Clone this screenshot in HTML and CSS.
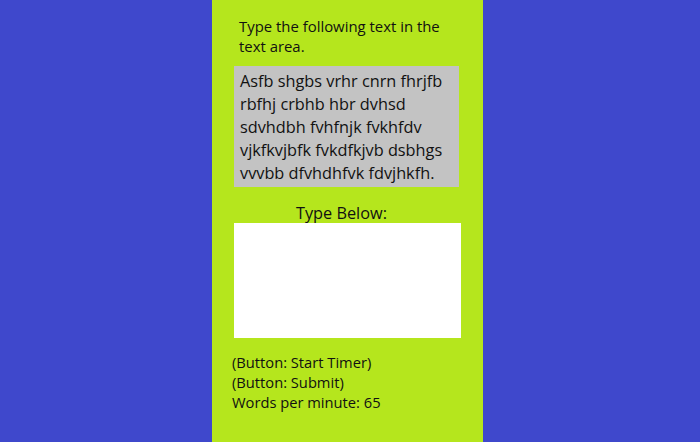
FILE: index.html
```html
<!DOCTYPE html>
<html>
<head>
<meta charset="utf-8">
<link rel="stylesheet" href="styles.css">
</head>
<body>
<main class="column">
  <p class="instructions">Type the following text in the text area.</p>
  <div class="sample">Asfb shgbs vrhr cnrn fhrjfb rbfhj crbhb hbr dvhsd sdvhdbh fvhfnjk fvkhfdv vjkfkvjbfk fvkdfkjvb dsbhgs vvvbb dfvhdhfvk fdvjhkfh.</div>
  <div class="label">Type Below:</div>
  <div class="typing-area"></div>
  <div class="controls">
    <div>(Button: Start Timer)</div>
    <div>(Button: Submit)</div>
    <div>Words per minute: 65</div>
  </div>
</main>
</body>
</html>
```
FILE: styles.css
```css
html, body {
  margin: 0;
  padding: 0;
}
body {
  background: #3f48cc;
  height: 442px;
  overflow: hidden;
  font-family: "Open Sans", "Noto Sans CJK KR", sans-serif;
  color: #111;
}
.column {
  margin-left: 212px;
  width: 271px;
  height: 442px;
  background: #b5e61d;
  display: flex;
  flex-direction: column;
}
.instructions {
  margin: 0;
  padding: 16px 18px 0 27px;
  font-size: 14.9px;
  line-height: 20px;
}
.sample {
  margin: 10px 0 0 22px;
  width: 219px;
  padding: 4px 0 2px 6px;
  background: #c3c3c3;
  font-size: 16.3px;
  line-height: 23px;
}
.label {
  margin-top: 16px;
  padding-left: 84px;
  font-size: 16.3px;
  line-height: 20px;
  height: 20px;
}
.typing-area {
  margin-left: 22px;
  width: 227px;
  height: 115px;
  background: #fff;
}
.controls {
  margin-top: 14px;
  padding-left: 20px;
  font-size: 14.7px;
  line-height: 20px;
}
```
